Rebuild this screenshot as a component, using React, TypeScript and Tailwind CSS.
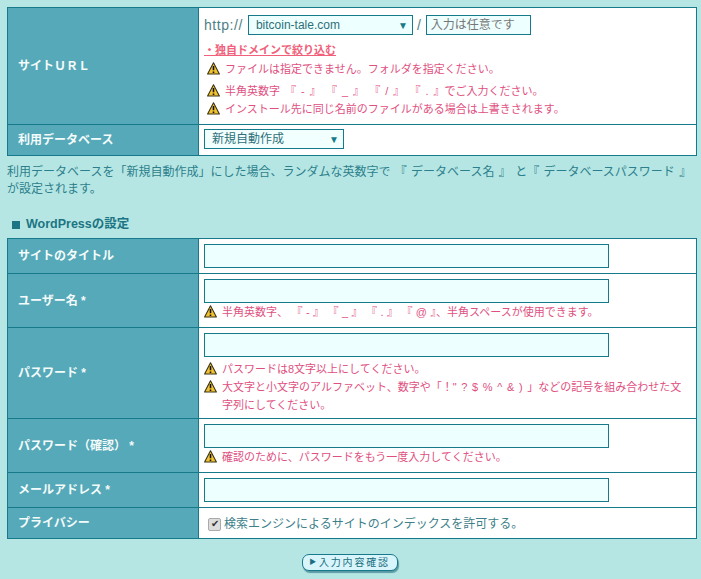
const font = { fontFamily: '"Liberation Sans", "Noto Sans CJK JP", sans-serif' }

function Warn({ children, className = "" }: { children: React.ReactNode; className?: string }) {
  return (
    <div className={`flex items-start gap-[5px] text-[11px] leading-[18px] text-[#e0507f] ${className}`}>
      <svg width="13" height="13" viewBox="0 0 13 13" className="mt-[2px] shrink-0">
        <path d="M6.5 0.8 L12.4 12 L0.6 12 Z" fill="#f2c230" stroke="#3a3418" strokeWidth="1.1" strokeLinejoin="round" />
        <path d="M6.5 4 V8.2 M6.5 9.4 V11" stroke="#111" strokeWidth="1.6" />
      </svg>
      <span>{children}</span>
    </div>
  )
}

function Row({ label, children, className = "" }: { label: string; children: React.ReactNode; className?: string }) {
  return (
    <div className={`flex border-t border-[#167a8a] first:border-t-0 ${className}`}>
      <div className="flex w-[191px] shrink-0 items-center border-r border-[#167a8a] bg-[#56a9b8] pl-[10px] text-[12px] font-bold text-[#f4fbfb]">
        {label}
      </div>
      <div className="min-w-0 flex-1 bg-white pl-[5px] pr-1">{children}</div>
    </div>
  )
}

function Field() {
  return <div className="h-6 w-[405px] border border-[#167a8a] bg-[#eeffff]" />
}

export default function App() {
  return (
    <div style={font} className="h-[579px] w-[701px] overflow-hidden bg-[#b6e6e3] px-[7px] pt-[7px] text-[#2c7f8c]">
      <div className="w-[690px] border border-[#167a8a]">
        <Row label="サイトＵＲＬ" className="h-[116px]">
          <div className="flex h-[27px] items-center pt-[7px] text-[14px] text-[#4d7f87]">
            <span className="mr-[5px] tracking-[0.55px]">http://</span>
            <div className="flex h-5 w-[165px] items-center justify-between border border-[#167a8a] bg-[#eeffff] pl-[7px] pr-[4px] text-[12px] text-[#2d6f7a]">
              bitcoin-tale.com
              <span className="text-[10px] text-[#167a8a]">▼</span>
            </div>
            <span className="ml-[4px] mr-[5px]">/</span>
            <div className="flex h-5 w-[105px] items-center border border-[#167a8a] bg-[#eeffff] pl-1 text-[12px] text-[#777]">入力は任意です</div>
          </div>
          <div className="mt-[7px] text-[11px] font-bold leading-[16px] text-[#f0607a] underline">・独自ドメインで絞り込む</div>
          <Warn className="mt-[2px] pl-[3px]">ファイルは指定できません。フォルダを指定ください。</Warn>
          <Warn className="mt-[4px] pl-[3px] [word-spacing:2px]">半角英数字 『 - 』 『 _ 』 『 / 』 『 . 』でご入力ください。</Warn>
          <Warn className="pl-[3px]">インストール先に同じ名前のファイルがある場合は上書きされます。</Warn>
        </Row>
        <Row label="利用データベース" className="h-[31px]">
          <div className="flex h-full items-center pb-[2px]">
            <div className="flex h-5 w-[140px] items-center justify-between border border-[#167a8a] bg-[#f2ffff] pl-[7px] pr-[4px] text-[12px] text-[#2d6f7a]">
              新規自動作成
              <span className="text-[10px] text-[#167a8a]">▼</span>
            </div>
          </div>
        </Row>
      </div>

      <p className="mt-[8px] w-[690px] text-[12px] leading-[17px] text-[#2c7f8c] [word-spacing:1px]">
        利用データベースを「新規自動作成」にした場合、ランダムな英数字で 『 データベース名 』 と『 データベースパスワード 』が設定されます。
      </p>

      <div className="mt-[18px] flex items-center pl-[5px] text-[12.5px] font-bold leading-[17px] text-[#1b7584]">
        <span className="mr-[6px] h-2 w-2 bg-[#1b7584]" />
        WordPressの設定
      </div>

      <div className="mt-[5px] w-[690px] border border-[#167a8a]">
        <Row label="サイトのタイトル" className="h-[34px]">
          <div className="pt-[5px]"><Field /></div>
        </Row>
        <Row label="ユーザー名 *" className="h-[54px]">
          <div className="pt-[5px]"><Field /></div>
          <Warn className="[word-spacing:0.4px]">半角英数字、 『 - 』 『 _ 』 『 . 』 『 @ 』、半角スペースが使用できます。</Warn>
        </Row>
        <Row label="パスワード *" className="h-[91px]">
          <div className="pt-[5px]"><Field /></div>
          <Warn className="mt-[3px]">パスワードは8文字以上にしてください。</Warn>
          <Warn className="pr-1 [word-spacing:1.6px]">大文字と小文字のアルファベット、数字や「！&quot; ? $ % ^ &amp; ) 」などの記号を組み合わせた文字列にしてください。</Warn>
        </Row>
        <Row label="パスワード（確認） *" className="h-[54px]">
          <div className="pt-[5px]"><Field /></div>
          <Warn>確認のために、パスワードをもう一度入力してください。</Warn>
        </Row>
        <Row label="メールアドレス *" className="h-[35px]">
          <div className="pt-[5px]"><Field /></div>
        </Row>
        <Row label="プライバシー" className="h-[31px]">
          <div className="flex h-full items-center pl-[4px] pt-[2px] text-[12px] text-[#3d7f8a]">
            <span className="mr-[3px] flex h-[13px] w-[13px] items-center justify-center rounded-[2px] border border-[#aaa] bg-[#ddd] text-[10px] leading-none text-[#333]">✔</span>
            検索エンジンによるサイトのインデックスを許可する。
          </div>
        </Row>
      </div>

      <div className="mt-[15px] flex justify-center pr-[2px]">
        <button className="flex h-[17px] w-[96px] items-center justify-center rounded-[7px] border border-[#167a8a] bg-[#d8f5fb] text-[10px] tracking-[1.8px] text-[#1b6f7e] shadow-[1px_2px_1px_#5a9aa5]">
          <span className="mr-[1px] text-[7px]">▶</span>入力内容確認
        </button>
      </div>
    </div>
  )
}
